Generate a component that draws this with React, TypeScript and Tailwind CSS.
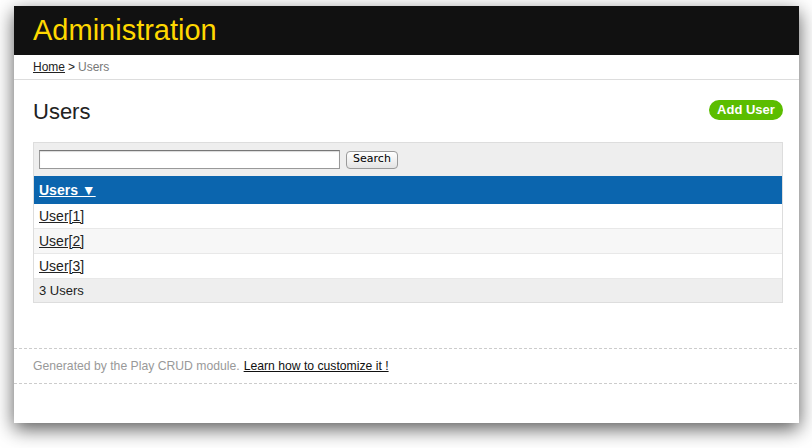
import React from "react";

const users = ["User[1]", "User[2]", "User[3]"];

const App: React.FC = () => {
  return (
    <div className="w-[812px] h-[448px] bg-white pt-[6px] pl-[14px] overflow-hidden font-['Liberation_Sans',Arial,sans-serif]">
      <div className="w-[785px] h-[417px] bg-white flex flex-col shadow-[0_6px_18px_rgba(0,0,0,0.65)]">
        <header className="h-[49px] bg-[#111111] pl-[19px] flex items-center">
          <h1 className="text-[29px] leading-none text-[#ffd800] pb-[1px]">Administration</h1>
        </header>

        <nav className="h-[25px] border-b border-[#dddddd] pl-[19px] flex items-center text-[12px] text-[#222]">
          <a href="#" className="underline">Home</a>
          <span className="mx-[3px]">&gt;</span>
          <span className="text-[#777]">Users</span>
        </nav>

        <section className="pl-[19px] pr-[16px] pt-[20px]">
          <div className="flex items-center justify-between h-[24px]">
            <h2 className="text-[22px] leading-none text-[#222]">Users</h2>
            <a
              href="#"
              className="h-[20px] w-[74px] -mt-[5px] rounded-full bg-[#5bbd00] text-white font-bold text-[13px] flex items-center justify-center"
            >
              Add User
            </a>
          </div>

          <div className="mt-[18px] border border-[#dddddd]">
            <div className="h-[33px] bg-[#eeeeee] flex items-center pl-[5px] gap-[6px]">
              <input
                type="text"
                className="w-[301px] h-[19px] bg-white border border-[#999] border-t-[#777] shadow-[inset_0_1px_1px_rgba(0,0,0,0.15)]"
              />
              <button className="h-[18px] w-[52px] rounded-[4px] border border-[#9a9a9a] bg-gradient-to-b from-white to-[#e4e4e4] text-[11px] font-['DejaVu_Sans',sans-serif] text-black flex items-center justify-center">
                Search
              </button>
            </div>

            <div className="h-[28px] bg-[#0b65ae] flex items-center pl-[5px]">
              <a href="#" className="text-white font-bold text-[14px] underline">
                Users ▼
              </a>
            </div>

            {users.map((u, i) => (
              <div
                key={u}
                className={`h-[25px] flex items-center pl-[5px] border-b border-[#e8e8e8] text-[14px] ${
                  i === 1 ? "bg-[#f7f7f7]" : "bg-white"
                }`}
              >
                <a href="#" className="underline text-[#222]">{u}</a>
              </div>
            ))}

            <div className="h-[23px] bg-[#eeeeee] flex items-center pl-[5px] text-[13px] text-[#222]">
              3 Users
            </div>
          </div>
        </section>

        <footer className="mt-[45px] mr-[2px] border-t border-b border-dashed border-[#cccccc] h-[36px] pl-[19px] flex items-center text-[12.2px] text-[#999]">
          <span>Generated by the Play CRUD module.</span>
          <a href="#" className="ml-[4px] underline text-[#111]">Learn how to customize it !</a>
        </footer>
      </div>
    </div>
  );
};

export default App;
